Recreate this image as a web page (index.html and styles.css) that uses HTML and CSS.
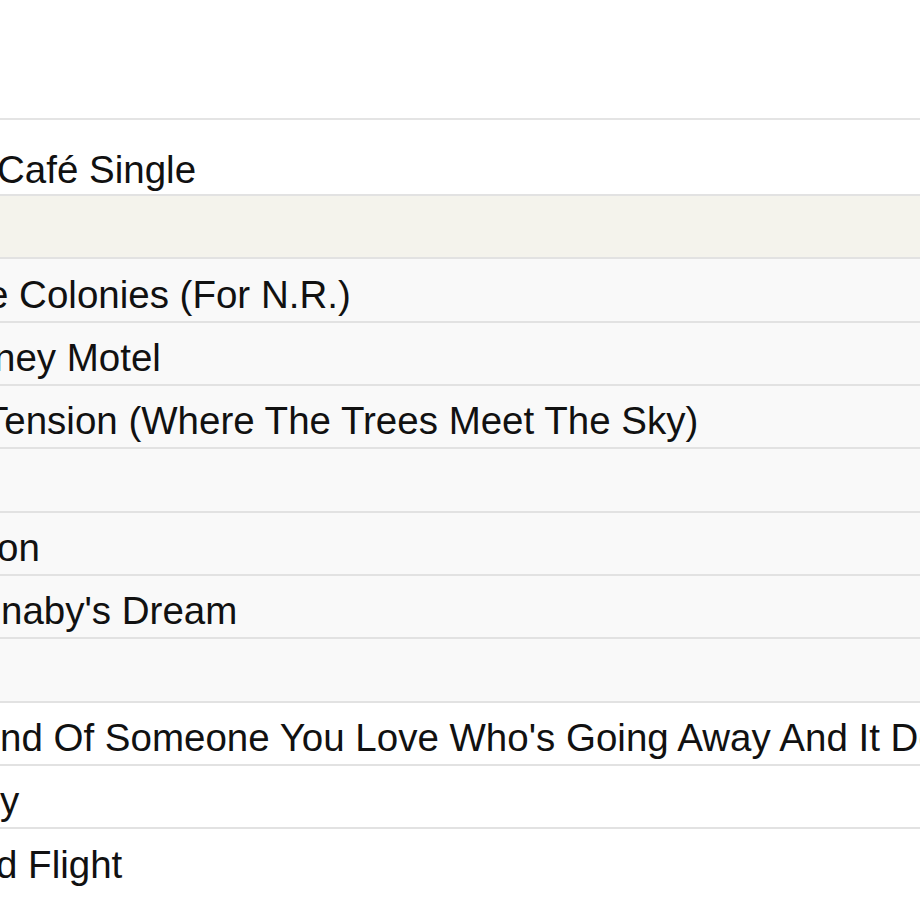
FILE: index.html
```html
<!DOCTYPE html>
<html>
<head>
<meta charset="utf-8">
<link rel="stylesheet" href="styles.css">
</head>
<body>
<div class="list">
  <div class="row row-first"><span class="t t1">Café Single</span></div>
  <div class="row row-sel"><span class="t"></span></div>
  <div class="row row-alt"><span class="t t3">e Colonies (For N.R.)</span></div>
  <div class="row row-alt"><span class="t t4">ney Motel</span></div>
  <div class="row row-alt"><span class="t t5">Tension (Where The Trees Meet The Sky)</span></div>
  <div class="row row-alt"><span class="t"></span></div>
  <div class="row row-alt"><span class="t t7">on</span></div>
  <div class="row row-alt"><span class="t t8">naby's Dream</span></div>
  <div class="row row-alt"><span class="t"></span></div>
  <div class="row"><span class="t t10">nd Of Someone You Love Who's Going Away And It Doesn't Matter</span></div>
  <div class="row"><span class="t t11">y</span></div>
  <div class="row row-last"><span class="t t12">d Flight</span></div>
</div>
</body>
</html>
```

FILE: styles.css
```css
html, body {
  margin: 0;
  padding: 0;
  background: #ffffff;
  overflow: hidden;
}

body {
  width: 920px;
  height: 920px;
  font-family: "Liberation Sans", Arial, Helvetica, sans-serif;
  color: #111111;
}

.list {
  margin-top: 118px;
  border-top: 2px solid #e4e4e4;
}

.row {
  box-sizing: border-box;
  height: 63.33px;
  padding-top: 13.5px;
  border-bottom: 2px solid #e2e2e2;
  background: #ffffff;
  white-space: nowrap;
  overflow: hidden;
}

.row-first {
  height: 76px;
  padding-top: 27.5px;
}

.row-sel {
  background: #f4f3ec;
}

.row-alt {
  background: #f9f9f9;
}

.row-last {
  border-bottom: none;
}

.t {
  display: block;
  font-size: 38.5px;
  line-height: 44px;
  height: 44px;
}

.t1 { margin-left: -3px; }
.t3 { margin-left: -13px; }
.t4 { margin-left: -6px; }
.t5 { margin-left: -15px; }
.t7 { margin-left: -3px; }
.t8 { margin-left: 1px; }
.t10 { margin-left: 0; }
.t11 { margin-left: 0; }
.t12 { margin-left: -4px; }
```
